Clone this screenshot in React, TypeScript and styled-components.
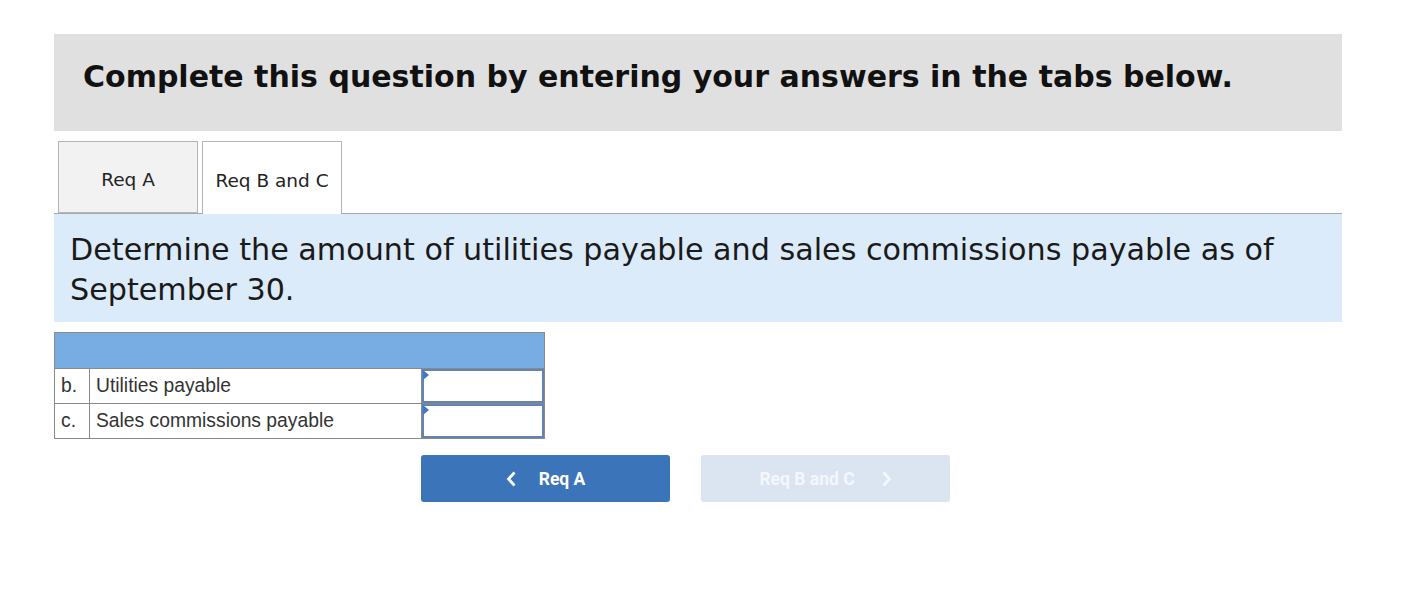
import React from "react";
import styled, { createGlobalStyle } from "styled-components";

const Global = createGlobalStyle`
  html, body { margin: 0; padding: 0; background: #fff; }
  body { font-family: "DejaVu Sans", Verdana, sans-serif; }
`;

const Page = styled.div`
  width: 1416px;
  height: 589px;
  padding: 34px 74px 0 54px;
  box-sizing: border-box;
  display: flex;
  flex-direction: column;
`;

const Banner = styled.div`
  background: #e0e0e0;
  height: 97px;
  display: flex;
  align-items: center;
  padding-left: 29px;
  box-sizing: border-box;
`;

const Title = styled.h1`
  margin: 0;
  font-family: "DejaVu Sans", Verdana, sans-serif;
  font-weight: bold;
  font-size: 30px;
  color: #111;
  margin-top: -12px;
`;

const TabBar = styled.div`
  display: flex;
  gap: 4px;
  padding-left: 4px;
  margin-top: 10px;
  border-bottom: 1px solid #a9a9a9;
  height: 72px;
  box-sizing: content-box;
`;

const Tab = styled.div<{ $active?: boolean }>`
  width: 140px;
  box-sizing: border-box;
  height: ${(p) => (p.$active ? "73px" : "72px")};
  margin-bottom: ${(p) => (p.$active ? "-1px" : "0")};
  border: 1px solid #b5b5b5;
  border-bottom: ${(p) => (p.$active ? "none" : "1px solid #b5b5b5")};
  background: ${(p) => (p.$active ? "#fff" : "#f2f2f2")};
  display: flex;
  align-items: center;
  justify-content: center;
  font-size: 18.5px;
  color: #222;
  padding-top: 5px;
`;

const Prompt = styled.div`
  background: #dcebf9;
  padding: 16px 16px 12px 16px;
  font-size: 30.2px;
  line-height: 40px;
  color: #1a1a1a;
  height: 108px;
  box-sizing: border-box;
`;

const Table = styled.table`
  margin-top: 10px;
  border-collapse: collapse;
  width: 490px;
  font-family: "Liberation Sans", Arial, sans-serif;
  font-size: 19.3px;
  color: #333;
  table-layout: fixed;
`;

const HeadCell = styled.td`
  background: #77ade3;
  height: 35px;
  border: 1px solid #8a8a8a;
  padding: 0;
`;

const Cell = styled.td`
  border: 1px solid #8a8a8a;
  height: 34px;
  padding: 0 0 0 6px;
  white-space: nowrap;
`;

const InputCell = styled.td`
  border: 1px solid #8a8a8a;
  padding: 0;
  height: 34px;
  position: relative;
`;

const Input = styled.div`
  position: absolute;
  inset: 0;
  border: 2px solid #6384b3;
  background: #fff;
  &::before {
    content: "";
    position: absolute;
    left: -1px;
    top: -1px;
    border-top: 5px solid transparent;
    border-bottom: 5px solid transparent;
    border-left: 6px solid #3d78c9;
  }
`;

const NavRow = styled.div`
  display: flex;
  gap: 31px;
  margin-top: 16px;
  padding-left: 367px;
`;

const NavButton = styled.button<{ $disabled?: boolean }>`
  width: 249px;
  height: 47px;
  border: none;
  border-radius: 3px;
  background: ${(p) => (p.$disabled ? "#dbe4f1" : "#3b74b9")};
  color: ${(p) => (p.$disabled ? "#f4f7fb" : "#fff")};
  font-family: Roboto, "Liberation Sans", Arial, sans-serif;
  font-weight: bold;
  font-size: 17.5px;
  display: flex;
  align-items: center;
  justify-content: center;
  gap: ${(p) => (p.$disabled ? "26px" : "22px")};
  padding: 0;
`;

const Chevron = ({ dir }: { dir: "left" | "right" }) => (
  <svg width="11" height="16" viewBox="0 0 11 16">
    <path
      d={dir === "left" ? "M8.5 1.5 L2.5 8 L8.5 14.5" : "M2.5 1.5 L8.5 8 L2.5 14.5"}
      fill="none"
      stroke="currentColor"
      strokeWidth="2.8"
    />
  </svg>
);

export default function App() {
  return (
    <>
      <Global />
      <Page>
        <Banner>
          <Title>Complete this question by entering your answers in the tabs below.</Title>
        </Banner>
        <TabBar>
          <Tab>Req A</Tab>
          <Tab $active>Req B and C</Tab>
        </TabBar>
        <Prompt>
          Determine the amount of utilities payable and sales commissions payable as of September 30.
        </Prompt>
        <Table>
          <colgroup>
            <col style={{ width: 35 }} />
            <col style={{ width: 332 }} />
            <col style={{ width: 123 }} />
          </colgroup>
          <tbody>
            <tr>
              <HeadCell colSpan={3} />
            </tr>
            <tr>
              <Cell>b.</Cell>
              <Cell>Utilities payable</Cell>
              <InputCell>
                <Input />
              </InputCell>
            </tr>
            <tr>
              <Cell>c.</Cell>
              <Cell>Sales commissions payable</Cell>
              <InputCell>
                <Input />
              </InputCell>
            </tr>
          </tbody>
        </Table>
        <NavRow>
          <NavButton>
            <Chevron dir="left" />
            Req A
          </NavButton>
          <NavButton $disabled>
            Req B and C
            <Chevron dir="right" />
          </NavButton>
        </NavRow>
      </Page>
    </>
  );
}
